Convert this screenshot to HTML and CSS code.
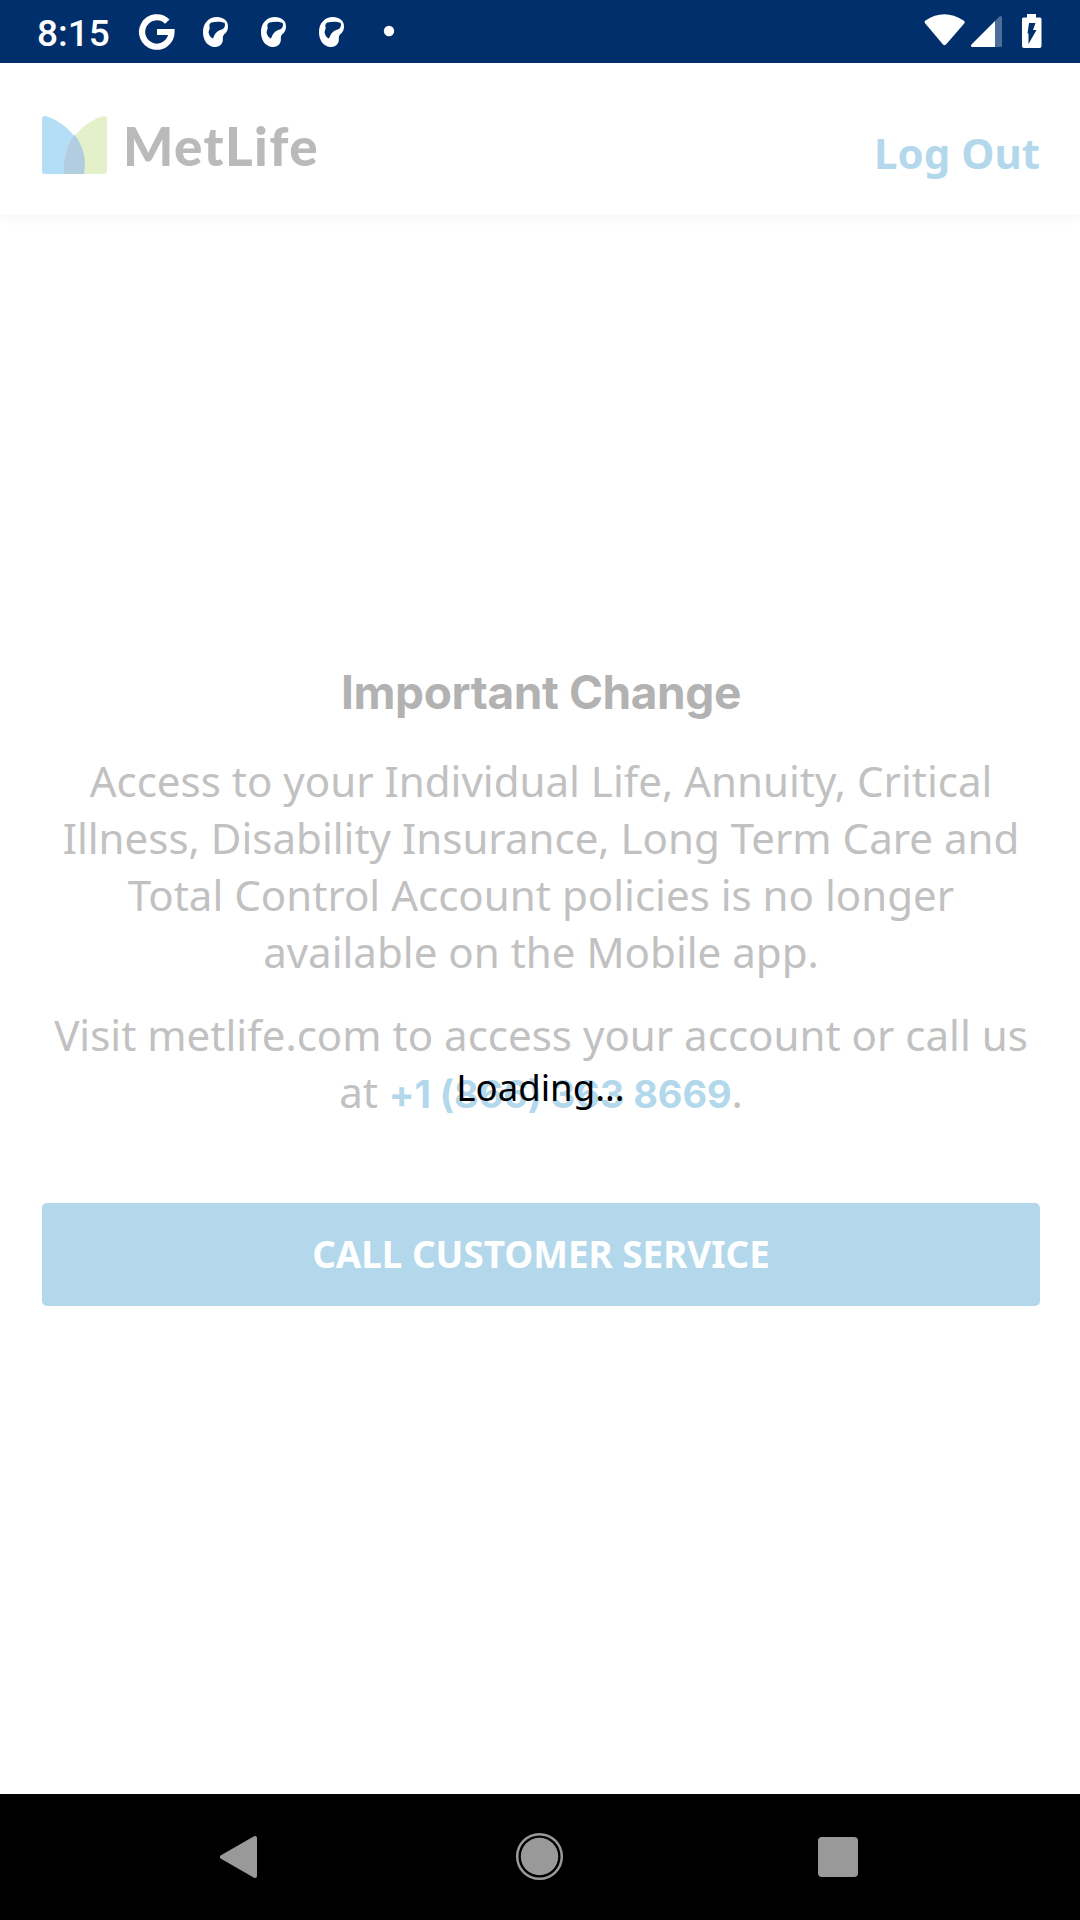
FILE: index.html
```html
<!DOCTYPE html>
<html lang="en">
<head>
<meta charset="utf-8">
<title>MetLife</title>
<link rel="stylesheet" href="styles.css">
</head>
<body>
<div class="screen">
  <div class="status">
    <span class="clock">8:15</span>
    <svg class="notifications" width="260" height="63" viewBox="136 0 260 63">
      <path d="M167.300 21.700A14.700 14.700 0 1 0 171.500 32H157" fill="none" stroke="#fff" stroke-width="6.200"/>
      <defs>
        <g id="bean">
          <path fill="#fff" d="M15 17C21 17 26 20.500 26 26C26 30 25 32 22 34.500C20 37 21.500 39 20.500 42C19 46 16 47 12 47C5 46 1 40 1 32C1 23 7 17 15 17Z"/>
          <path fill="#002f6c" d="M9.500 22.500C14 21.300 19 21.300 22.500 22.800C23.500 25 23 27 21 29C17 30 14 32 12.500 35L11 38.500C9 38 7 35.500 6.500 32C7 30 8 29 7.500 27C7 25 7.500 23.500 9.500 22.500Z"/>
        </g>
      </defs>
      <use href="#bean" x="202"/>
      <use href="#bean" x="260"/>
      <use href="#bean" x="318"/>
      <circle cx="389" cy="31" r="5.200" fill="#fff"/>
    </svg>
    <svg class="system" width="120" height="63" viewBox="923 0 120 63">
      <path fill="#fff" d="M925.500 20.500Q944 8 963.500 20.500Q965.500 21.500 964.200 23.500L946 44.500Q944.500 46 943 44.500L925.300 23.500Q923.700 21.500 925.500 20.500Z"/>
      <path fill="#fff" d="M995 21V47H972Q970 46 971.500 44.500Z"/>
      <path fill="#4d6e98" d="M995 21L999.500 16.500Q1002 15 1002 18V45.500Q1002 47 1000.500 47H995Z"/>
      <path fill="#fff" d="M1027 14H1036V17.500H1040Q1041.500 17.500 1041.500 19V46Q1041.500 48 1039.500 48H1024Q1022 48 1022 46V19Q1022 17.500 1023.500 17.500H1027Z"/>
      <path fill="#002f6c" d="M1029 23H1035.500L1033 30H1036.500L1028.500 44V33.500H1027.500Z"/>
    </svg>
  </div>
  <header class="header">
    <div class="brand">
      <svg width="65" height="58" viewBox="0 0 65 58">
        <path fill="#b4def5" d="M0 3Q0 0 3 0C22 5 43 25 43 49Q43 54 42 58H3Q0 58 0 55Z"/>
        <path fill="#e4f0ca" d="M65 3Q65 0 62 0C43 5 22 25 22 49V58H62Q65 58 65 55Z"/>
        <path fill="#b2cde0" d="M32.500 18.500C38 26 43 36 43 49L42 58H22V49C22 37 27 27 32.500 18.500Z"/>
      </svg>
      <span class="brand-name">MetLife</span>
    </div>
    <a class="logout">Log Out</a>
  </header>
  <main class="content">
    <h1 class="title">Important Change</h1>
    <p class="copy">Access to your Individual Life, Annuity, Critical<br>Illness, Disability Insurance, Long Term Care and<br>Total Control Account policies is no longer<br>available on the Mobile app.</p>
    <p class="copy">Visit metlife.com to access your account or call us<br>at <a class="phone">+1 (866) 363 8669</a>.</p>
    <button class="call">CALL CUSTOMER SERVICE</button>
    <div class="loading">Loading...</div>
  </main>
  <nav class="nav">
    <svg width="1080" height="126" viewBox="0 1794 1080 126">
      <path fill="#999" stroke="#999" stroke-width="4" stroke-linejoin="round" d="M222 1857L255 1838V1876Z"/>
      <circle cx="539.500" cy="1856.500" r="22.300" fill="none" stroke="#999" stroke-width="2.500"/>
      <circle cx="539.500" cy="1856.500" r="18.700" fill="#999"/>
      <rect x="818" y="1837" width="40" height="40" rx="4" fill="#999"/>
    </svg>
  </nav>
</div>
</body>
</html>
```
FILE: styles.css
```css
* { box-sizing: border-box; }
body { margin: 0; font-family: "Noto Sans", sans-serif; background: #fff; }
.screen { width: 1080px; height: 1920px; display: flex; flex-direction: column; overflow: hidden; }
.status { height: 63px; flex: none; background: #002f6c; color: #fff; display: flex; align-items: center; padding-left: 37px; }
.clock { width: 99px; font: 500 37px/64px Roboto, sans-serif; padding-top: 4px; white-space: nowrap; }
.notifications { flex: none; }
.system { flex: none; margin-left: auto; margin-right: 37px; }
.header { height: 152px; flex: none; display: flex; justify-content: space-between; align-items: flex-start; padding: 53px 40px 0 42px; box-shadow: 0 3px 12px rgba(0, 0, 0, .04); }
.brand { display: flex; gap: 16px; }
.brand-name { font: 900 53px/60px Lato, sans-serif; letter-spacing: 1.4px; color: #bababa; }
.logout { font-weight: 700; font-size: 42px; line-height: 57px; padding-top: 8px; color: #b3d8eb; }
.content { flex: 1; position: relative; padding: 449px 40px 0 42px; text-align: center; }
.title { margin: 0 0 31px; font: 700 46px/57px Inter, sans-serif; letter-spacing: -.4px; color: #b2b2b2; white-space: nowrap; }
.copy { margin: 0 0 26px; font-size: 42.05px; line-height: 57px; color: #c1c1c1; white-space: nowrap; }
.phone { font-family: Inter, sans-serif; font-size: 38px; font-weight: 700; letter-spacing: -.1px; color: #b3d8eb; line-height: 1; }
.call { display: block; width: 100%; height: 103px; margin-top: 83px; padding: 0 0 2px; border: 0; border-radius: 5px; background: #b3d8eb; color: #fff; font: 700 36.8px/50px "Noto Sans", sans-serif; white-space: nowrap; }
.loading { position: absolute; left: 1px; right: 0; top: 847px; font-size: 36.6px; line-height: 50px; color: #000; }
.nav { height: 126px; flex: none; background: #000; display: flex; }
```
